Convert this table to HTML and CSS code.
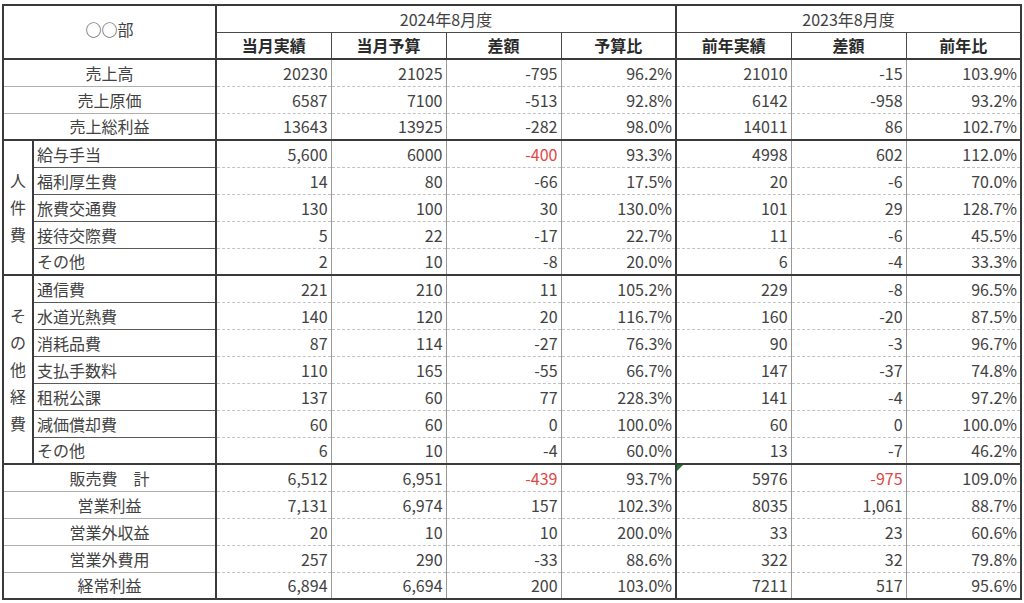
FILE: index.html
```html
<!DOCTYPE html>
<html lang="ja">
<head>
<meta charset="utf-8">
<title>○○部 損益表</title>
<link rel="stylesheet" href="styles.css">
</head>
<body>
<table class="sheet">
  <colgroup>
    <col class="c-cat"><col class="c-name">
    <col class="c-num"><col class="c-num"><col class="c-num"><col class="c-num">
    <col class="c-num"><col class="c-num"><col class="c-num">
  </colgroup>
  <thead>
    <tr class="hd1">
      <th class="dept" colspan="2" rowspan="2">○○部</th>
      <th class="period" colspan="4">2024年8月度</th>
      <th class="period grp" colspan="3">2023年8月度</th>
    </tr>
    <tr class="hd2">
      <th>当月実績</th><th>当月予算</th><th>差額</th><th>予算比</th>
      <th class="grp">前年実績</th><th>差額</th><th>前年比</th>
    </tr>
  </thead>
  <tbody>
    <tr><td class="lbl" colspan="2">売上高</td><td class="num">20230</td><td class="num">21025</td><td class="num">-795</td><td class="num">96.2%</td><td class="num grp">21010</td><td class="num">-15</td><td class="num">103.9%</td></tr>
    <tr><td class="lbl" colspan="2">売上原価</td><td class="num">6587</td><td class="num">7100</td><td class="num">-513</td><td class="num">92.8%</td><td class="num grp">6142</td><td class="num">-958</td><td class="num">93.2%</td></tr>
    <tr class="sec-end"><td class="lbl" colspan="2">売上総利益</td><td class="num">13643</td><td class="num">13925</td><td class="num">-282</td><td class="num">98.0%</td><td class="num grp">14011</td><td class="num">86</td><td class="num">102.7%</td></tr>

    <tr><td class="cat" rowspan="5"><div class="cat-text">人件費</div></td><td class="name">給与手当</td><td class="num">5,600</td><td class="num">6000</td><td class="num neg">-400</td><td class="num">93.3%</td><td class="num grp">4998</td><td class="num">602</td><td class="num">112.0%</td></tr>
    <tr><td class="name">福利厚生費</td><td class="num">14</td><td class="num">80</td><td class="num">-66</td><td class="num">17.5%</td><td class="num grp">20</td><td class="num">-6</td><td class="num">70.0%</td></tr>
    <tr><td class="name">旅費交通費</td><td class="num">130</td><td class="num">100</td><td class="num">30</td><td class="num">130.0%</td><td class="num grp">101</td><td class="num">29</td><td class="num">128.7%</td></tr>
    <tr><td class="name">接待交際費</td><td class="num">5</td><td class="num">22</td><td class="num">-17</td><td class="num">22.7%</td><td class="num grp">11</td><td class="num">-6</td><td class="num">45.5%</td></tr>
    <tr class="sec-end"><td class="name">その他</td><td class="num">2</td><td class="num">10</td><td class="num">-8</td><td class="num">20.0%</td><td class="num grp">6</td><td class="num">-4</td><td class="num">33.3%</td></tr>

    <tr><td class="cat" rowspan="7"><div class="cat-text">その他経費</div></td><td class="name">通信費</td><td class="num">221</td><td class="num">210</td><td class="num">11</td><td class="num">105.2%</td><td class="num grp">229</td><td class="num">-8</td><td class="num">96.5%</td></tr>
    <tr><td class="name">水道光熱費</td><td class="num">140</td><td class="num">120</td><td class="num">20</td><td class="num">116.7%</td><td class="num grp">160</td><td class="num">-20</td><td class="num">87.5%</td></tr>
    <tr><td class="name">消耗品費</td><td class="num">87</td><td class="num">114</td><td class="num">-27</td><td class="num">76.3%</td><td class="num grp">90</td><td class="num">-3</td><td class="num">96.7%</td></tr>
    <tr><td class="name">支払手数料</td><td class="num">110</td><td class="num">165</td><td class="num">-55</td><td class="num">66.7%</td><td class="num grp">147</td><td class="num">-37</td><td class="num">74.8%</td></tr>
    <tr><td class="name">租税公課</td><td class="num">137</td><td class="num">60</td><td class="num">77</td><td class="num">228.3%</td><td class="num grp">141</td><td class="num">-4</td><td class="num">97.2%</td></tr>
    <tr><td class="name">減価償却費</td><td class="num">60</td><td class="num">60</td><td class="num">0</td><td class="num">100.0%</td><td class="num grp">60</td><td class="num">0</td><td class="num">100.0%</td></tr>
    <tr class="sec-end"><td class="name">その他</td><td class="num">6</td><td class="num">10</td><td class="num">-4</td><td class="num">60.0%</td><td class="num grp">13</td><td class="num">-7</td><td class="num">46.2%</td></tr>

    <tr><td class="lbl" colspan="2">販売費　計</td><td class="num">6,512</td><td class="num">6,951</td><td class="num neg">-439</td><td class="num">93.7%</td><td class="num grp flagged"><span class="err-mark"></span>5976</td><td class="num neg">-975</td><td class="num">109.0%</td></tr>
    <tr><td class="lbl" colspan="2">営業利益</td><td class="num">7,131</td><td class="num">6,974</td><td class="num">157</td><td class="num">102.3%</td><td class="num grp">8035</td><td class="num">1,061</td><td class="num">88.7%</td></tr>
    <tr><td class="lbl" colspan="2">営業外収益</td><td class="num">20</td><td class="num">10</td><td class="num">10</td><td class="num">200.0%</td><td class="num grp">33</td><td class="num">23</td><td class="num">60.6%</td></tr>
    <tr><td class="lbl" colspan="2">営業外費用</td><td class="num">257</td><td class="num">290</td><td class="num">-33</td><td class="num">88.6%</td><td class="num grp">322</td><td class="num">32</td><td class="num">79.8%</td></tr>
    <tr><td class="lbl" colspan="2">経常利益</td><td class="num">6,894</td><td class="num">6,694</td><td class="num">200</td><td class="num">103.0%</td><td class="num grp">7211</td><td class="num">517</td><td class="num">95.6%</td></tr>
  </tbody>
</table>
</body>
</html>
```

FILE: styles.css
```css
html, body {
  margin: 0;
  padding: 0;
  background: #ffffff;
}

body {
  padding: 4px 0 0 2px;
  font-family: "Noto Sans CJK JP", "Noto Sans", sans-serif;
  font-size: 16px;
  color: #424242;
}

.sheet {
  border-collapse: collapse;
  table-layout: fixed;
  width: 1018px;
  border: 2px solid #3a3a3a;
}

.c-cat { width: 30px; }
.c-name { width: 183px; }
.c-num { width: 115px; }

.sheet tr {
  height: 27px;
}

.sheet th,
.sheet td {
  padding: 0 3px;
  line-height: 18px;
  white-space: nowrap;
  overflow: hidden;
}

.sheet th {
  font-weight: normal;
  text-align: center;
  border: 1px solid #4a4a4a;
}

.hd2 th {
  font-weight: bold;
  color: #2a2a2a;
  border-bottom: 2px solid #3a3a3a;
}

.sheet th.dept {
  border-right: 2px solid #3a3a3a;
  border-bottom: 2px solid #3a3a3a;
  padding-bottom: 6px;
}

.sheet .grp {
  border-left: 2px solid #3a3a3a;
}

.sheet td {
  border-top: 1px dashed #c2c2c2;
  border-bottom: 1px dashed #c2c2c2;
  border-left: 1px solid #9a9a9a;
  border-right: 1px solid #9a9a9a;
}

.sheet td.num {
  text-align: right;
}

.sheet td.num.grp {
  border-left: 2px solid #3a3a3a;
}

.sheet td.lbl {
  text-align: center;
  border-top: 1px solid #b0b0b0;
  border-bottom: 1px solid #b0b0b0;
  border-right: 2px solid #3a3a3a;
}

.sheet td.name {
  text-align: left;
  border-top: 1px solid #5a5a5a;
  border-bottom: 1px solid #5a5a5a;
  border-left: 2px solid #3a3a3a;
  border-right: 2px solid #3a3a3a;
}

.sheet td.cat {
  padding: 0;
  text-align: center;
  vertical-align: middle;
  border-bottom: 2px solid #3a3a3a;
}

.cat-text {
  width: 16px;
  margin: 0 auto;
  line-height: 27px;
  word-break: break-all;
  white-space: normal;
}

.sheet tr.sec-end td {
  border-bottom: 2px solid #3a3a3a;
}

.neg {
  color: #e04848;
}

.flagged {
  position: relative;
}

.err-mark {
  position: absolute;
  left: 0;
  top: 0;
  width: 0;
  height: 0;
  border-top: 6px solid #1f7a2e;
  border-right: 6px solid transparent;
}
```
